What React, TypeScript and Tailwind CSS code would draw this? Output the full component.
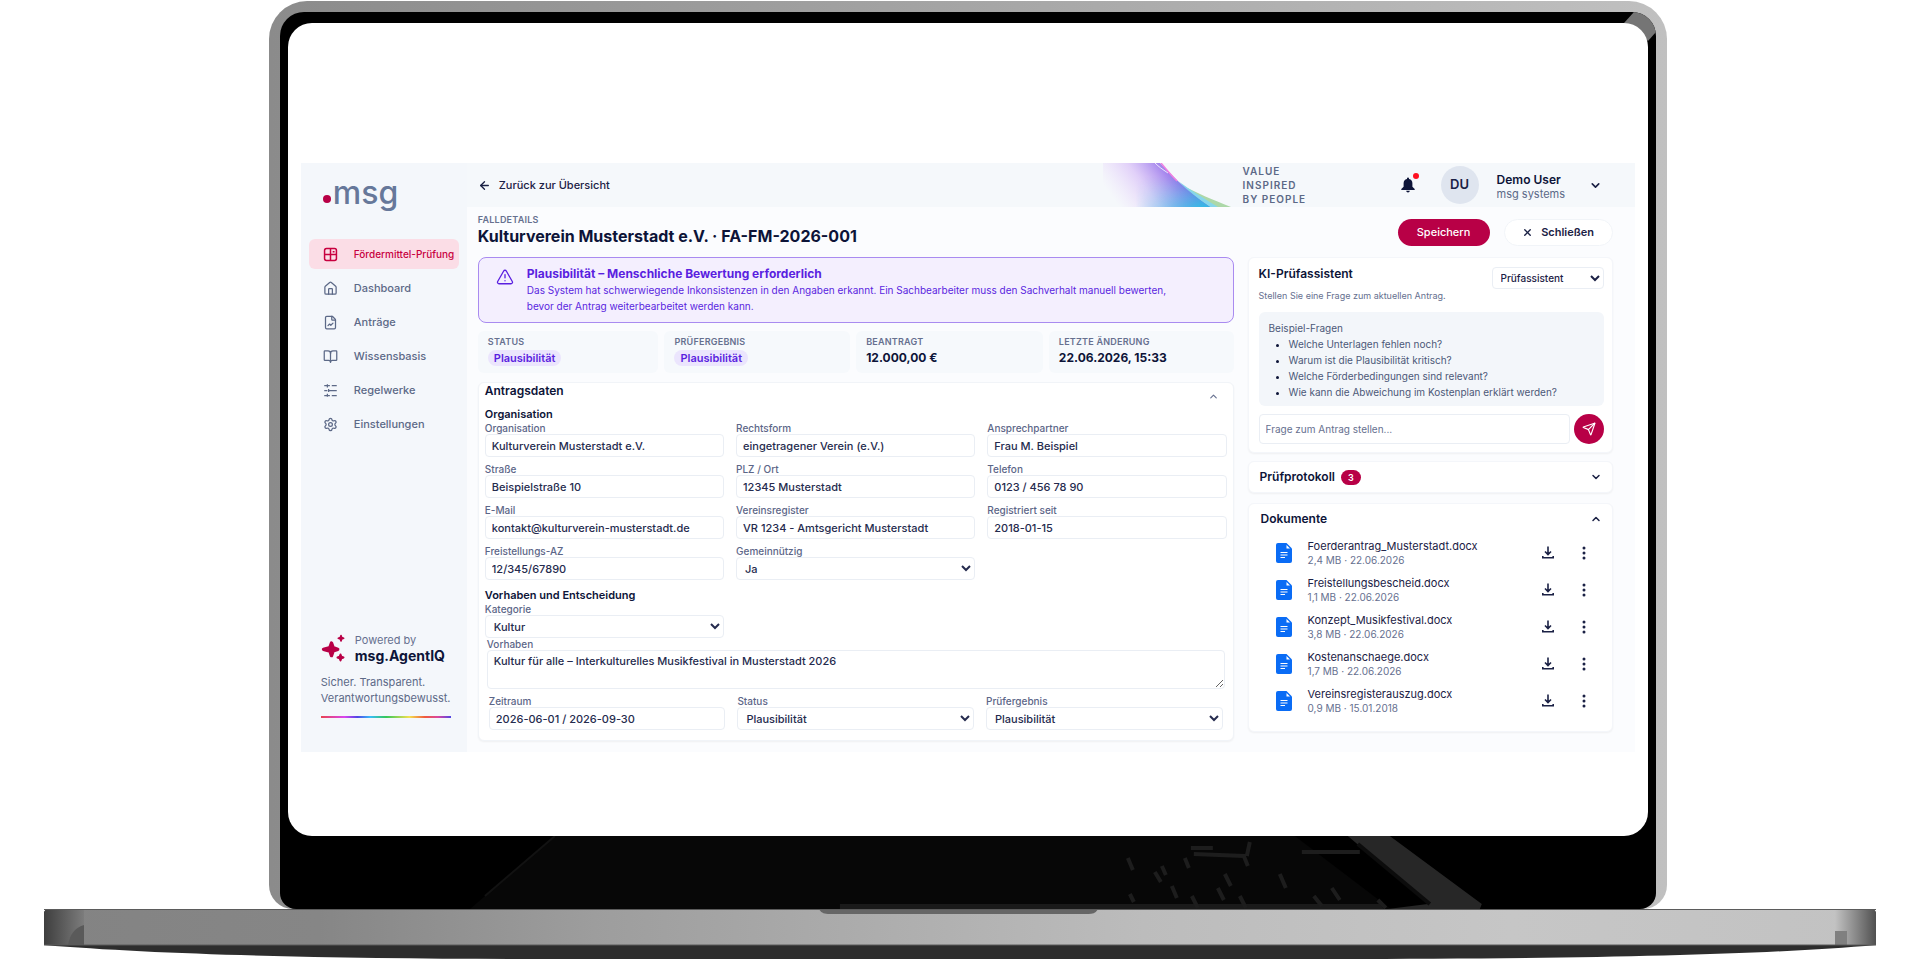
import { useId, useState } from "react";
import type { ReactNode } from "react";
import {
  ArrowLeft,
  BookOpen,
  ChevronDown,
  ChevronUp,
  FileChartLine,
  House,
  Send,
  Settings,
  TriangleAlert,
  X,
} from "lucide-react";

const inputClass =
  "h-[23px] w-full rounded border border-[#eaeef4] bg-white px-1.5 text-[11px] font-medium text-[#252b4e]";
const selectClass =
  "h-[23px] w-full rounded border border-[#eaeef4] bg-white px-1 text-[11px] font-medium text-[#252b4e]";

const navItems = [
  { name: "Fördermittel-Prüfung", href: "#pruefung", icon: <GridIcon /> },
  { name: "Dashboard", href: "#dashboard", icon: <House size={15} /> },
  { name: "Anträge", href: "#antraege", icon: <FileChartLine size={15} /> },
  { name: "Wissensbasis", href: "#wissensbasis", icon: <BookOpen size={15} /> },
  { name: "Regelwerke", href: "#regelwerke", icon: <RulesIcon /> },
  { name: "Einstellungen", href: "#einstellungen", icon: <Settings size={15} /> },
];

const questions = [
  "Welche Unterlagen fehlen noch?",
  "Warum ist die Plausibilität kritisch?",
  "Welche Förderbedingungen sind relevant?",
  "Wie kann die Abweichung im Kostenplan erklärt werden?",
];

const documents = [
  { name: "Foerderantrag_Musterstadt.docx", meta: "2,4 MB · 22.06.2026" },
  { name: "Freistellungsbescheid.docx", meta: "1,1 MB · 22.06.2026" },
  { name: "Konzept_Musikfestival.docx", meta: "3,8 MB · 22.06.2026" },
  { name: "Kostenanschaege.docx", meta: "1,7 MB · 22.06.2026" },
  { name: "Vereinsregisterauszug.docx", meta: "0,9 MB · 15.01.2018" },
];

function GridIcon() {
  return (
    <svg width="15" height="15" viewBox="0 0 24 24" fill="none" stroke="currentColor" strokeWidth="2.4">
      <rect x="2.5" y="2.5" width="19" height="19" rx="3" />
      <path d="M12 2.5v19M2.5 12h19M15.5 7.5h3" />
    </svg>
  );
}

function RulesIcon() {
  return (
    <svg width="15" height="15" viewBox="0 0 24 24" fill="none" stroke="currentColor" strokeWidth="2">
      <path d="M2 4h9M14 4h8M2 12h5M10 12h12M2 20h9M14 20h8M7 2v5M9 9.5v5M7 17v5" />
    </svg>
  );
}

function SparkleIcon() {
  return (
    <svg width="24" height="28" viewBox="0 0 24 28" fill="#b80046" stroke="#b80046" strokeLinejoin="round">
      <path strokeWidth="3.4" d="M10.500 9l1.600 4.600 4.600 1.700-4.600 1.700-1.600 4.600-1.600-4.600-6.400-1.700 6.400-1.700z" />
      <path strokeWidth="1.6" d="M20 1.5l.7 2 2 .7-2 .7-.7 2-.7-2-2-.7 2-.7z" />
      <path strokeWidth="2" d="M19.5 20.5l.8 2.2 2.2.8-2.2.8-.8 2.2-.8-2.2-2.2-.8 2.2-.8z" />
    </svg>
  );
}

function BellIcon() {
  return (
    <svg width="14" height="16" viewBox="0 0 14 16" fill="#0d1438">
      <path d="M7 .5a1 1 0 0 0-1 1v.4A4.4 4.4 0 0 0 2.6 6.2v3.6L.3 12v.9h13.4V12l-2.3-2.2V6.2A4.4 4.4 0 0 0 8 1.9v-.4a1 1 0 0 0-1-1zM5.2 13.7h3.6a1.8 1.8 0 0 1-3.6 0z" />
    </svg>
  );
}

function DocIcon() {
  return (
    <svg width="16" height="20" viewBox="0 0 16 20">
      <path d="M2 0h8.5L16 5.500V18a2 2 0 0 1-2 2H2a2 2 0 0 1-2-2V2a2 2 0 0 1 2-2z" fill="#0a6cf5" />
      <path d="M10.500 2v3.500H14z" fill="#fff" />
      <path d="M4.500 9.500h7M4.500 12h7M4.500 14.500h4.500" stroke="#fff" strokeWidth="1.1" />
    </svg>
  );
}

function DownloadIcon() {
  return (
    <svg width="12" height="13" viewBox="0 0 12 13" fill="none" stroke="#1b2145" strokeWidth="1.6">
      <path d="M6 .5v8M3 5.500l3 3 3-3M.8 10v1.800h10.400V10" />
    </svg>
  );
}

function DotsIcon() {
  return (
    <svg width="4" height="14" viewBox="0 0 4 14" fill="#1b2145">
      <circle cx="2" cy="2" r="1.5" />
      <circle cx="2" cy="7" r="1.5" />
      <circle cx="2" cy="12" r="1.5" />
    </svg>
  );
}

function HeaderWave() {
  return (
    <svg width="130" height="44" viewBox="0 0 130 44">
      <defs>
        <linearGradient id="wave" x1="0" y1="0.5" x2="1" y2="0.2">
          <stop offset="0" stopColor="#ecdcfb" stopOpacity="0" />
          <stop offset="0.35" stopColor="#dcc6f8" stopOpacity="0.8" />
          <stop offset="0.6" stopColor="#a98bee" />
          <stop offset="0.85" stopColor="#5b50dd" />
        </linearGradient>
        <linearGradient id="waveBottom" x1="0" y1="0" x2="0" y2="1">
          <stop offset="0.3" stopColor="#3cc5e6" stopOpacity="0" />
          <stop offset="1" stopColor="#2fc0e4" stopOpacity="0.9" />
        </linearGradient>
        <linearGradient id="waveFade" x1="0" y1="0" x2="1" y2="0">
          <stop offset="0.25" stopColor="#fff" stopOpacity="0" />
          <stop offset="0.75" stopColor="#fff" />
        </linearGradient>
        <mask id="waveMask">
          <rect width="130" height="44" fill="url(#waveFade)" />
        </mask>
      </defs>
      <path d="M79 22c16 9 30 14 49 22H103z" fill="#acd8a8" />
      <path d="M75 18c14 10 24 16 40 26H101z" fill="#86d6ea" />
      <path d="M0 0h57c12 12 26 28 50 44H0z" fill="url(#wave)" />
      <path d="M0 0h57c12 12 26 28 50 44H0z" fill="url(#waveBottom)" mask="url(#waveMask)" />
      <path d="M52 0c4 4 7 6 13 10" stroke="#fff" strokeWidth="0.8" fill="none" />
      <path d="M58 0c5 6 9 11 16 18" stroke="#ee7fe0" strokeWidth="1.5" fill="none" />
    </svg>
  );
}

function Field({
  label,
  value,
  options,
}: {
  label: string;
  value: string;
  options?: string[];
}) {
  const id = useId();

  return (
    <div className="flex flex-col">
      <label htmlFor={id} className="text-[10px] leading-3 font-medium text-[#5c6688]">
        {label}
      </label>
      {options ? (
        <select id={id} defaultValue={value} className={selectClass}>
          {options.map((option) => (
            <option key={option}>{option}</option>
          ))}
        </select>
      ) : (
        <input id={id} type="text" defaultValue={value} className={inputClass} />
      )}
    </div>
  );
}

function Stat({ label, children }: { label: string; children: ReactNode }) {
  return (
    <div className="flex flex-col gap-0.5 rounded-md bg-[#f6f9fc] px-2.5 pt-[5px] pb-[7px]">
      <dt className="text-[9px] leading-3 font-semibold tracking-wide text-[#66708f]">{label}</dt>
      <dd className="flex h-4 items-center text-xs font-bold text-[#0d1438]">{children}</dd>
    </div>
  );
}

function Badge() {
  return (
    <span className="rounded-full bg-[#ebe5fd] px-1.5 text-[11px] leading-4 font-semibold text-[#5a1fe0]">
      Plausibilität
    </span>
  );
}

function Sidebar() {
  const [active, setActive] = useState(navItems[0].name);

  return (
    <aside className="flex w-[166px] shrink-0 flex-col bg-[#f4f7fb] pt-2.5">
      {/* Logo */}
      <a href="#start" className="ml-[22px] flex h-10 items-center text-[32px] font-medium text-[#66789a]">
        <span className="mt-3 mr-0.5 size-2 rounded-full bg-[#b80046]" />
        msg
      </a>

      <nav className="mt-[26px] flex flex-col gap-1 px-2">
        {navItems.map((item) => {
          const isActive = active === item.name;

          return (
            <a
              key={item.name}
              href={item.href}
              onClick={() => setActive(item.name)}
              className={`flex h-[30px] items-center gap-4 rounded-md pl-3.5 font-medium whitespace-nowrap ${
                isActive ? "bg-[#fbdde6] text-[10px] text-[#c8003f]" : "text-[11px] text-[#5c6987]"
              }`}
            >
              <span className="shrink-0">{item.icon}</span>
              {item.name}
            </a>
          );
        })}
      </nav>

      <div className="mt-auto pb-[34px] pl-5">
        <div className="flex items-center gap-2.5">
          <SparkleIcon />
          <div>
            <p className="text-[11px] leading-4 text-[#66708f]">Powered by</p>
            <p className="text-sm leading-4 font-bold text-[#0d1438]">msg.AgentIQ</p>
          </div>
        </div>
        <p className="mt-2.5 text-[11px] leading-4 text-[#5c6987]">
          Sicher. Transparent.
          <br />
          Verantwortungsbewusst.
        </p>
        <div className="mt-2.5 h-0.5 w-[130px] bg-[linear-gradient(90deg,#e8434f,#d946ef_18%,#4f46e5_28%,#38bdf8_38%,#34c759_50%,#f5e050_68%,#ef5a3c_80%,#d946a0_90%,#4f46e5)]" />
      </div>
    </aside>
  );
}

function Header() {
  return (
    <header className="flex h-11 items-center bg-[#f5f8fb] pl-[11px]">
      <a href="#uebersicht" className="flex items-center gap-2 text-[11px] font-medium text-[#1b2145]">
        <ArrowLeft size={13} strokeWidth={2.5} />
        Zurück zur Übersicht
      </a>
      <div className="ml-auto flex w-[532px] items-center">
        <HeaderWave />
        <p className="ml-2.5 w-[158px] text-[10px] leading-[14px] font-semibold tracking-widest text-[#5c6987]">
          VALUE
          <br />
          INSPIRED
          <br />
          BY PEOPLE
        </p>
        <button type="button" aria-label="Benachrichtigungen" className="relative">
          <BellIcon />
          <span className="absolute -top-1 -right-1 size-1.5 rounded-full bg-[#ff1020]" />
        </button>
        <div className="ml-[26px] flex size-[38px] items-center justify-center rounded-full bg-[#dfe5ef] text-[13px] font-semibold text-[#1b2145]">
          DU
        </div>
        <div className="ml-[18px] w-[92px] pt-1 text-[#0d1438]">
          <p className="text-xs leading-[15px] font-semibold">Demo User</p>
          <p className="text-[11px] leading-[15px] text-[#5c6987]">msg systems</p>
        </div>
        <button type="button" aria-label="Benutzermenü">
          <ChevronDown size={13} strokeWidth={3} className="text-[#1b2145]" />
        </button>
      </div>
    </header>
  );
}

function CaseForm() {
  const projectId = useId();

  return (
    <section className="mt-[9px] rounded-md border border-[#f1f4f8] bg-white px-1.5 pb-2.5 shadow-xs">
      <div className="flex h-6 items-start justify-between pr-2">
        <h2 className="text-xs leading-4 font-semibold text-[#0d1438]">Antragsdaten</h2>
        <button type="button" aria-label="Antragsdaten einklappen" className="pt-2">
          <ChevronUp size={11} strokeWidth={2.5} className="text-[#66708f]" />
        </button>
      </div>

      <h3 className="text-[11px] leading-[14px] font-semibold text-[#0d1438]">Organisation</h3>
      <div className="mt-px grid grid-cols-3 gap-x-3 gap-y-1.5">
        <Field label="Organisation" value="Kulturverein Musterstadt e.V." />
        <Field label="Rechtsform" value="eingetragener Verein (e.V.)" />
        <Field label="Ansprechpartner" value="Frau M. Beispiel" />
        <Field label="Straße" value="Beispielstraße 10" />
        <Field label="PLZ / Ort" value="12345 Musterstadt" />
        <Field label="Telefon" value="0123 / 456 78 90" />
        <Field label="E-Mail" value="kontakt@kulturverein-musterstadt.de" />
        <Field label="Vereinsregister" value="VR 1234 - Amtsgericht Musterstadt" />
        <Field label="Registriert seit" value="2018-01-15" />
        <Field label="Freistellungs-AZ" value="12/345/67890" />
        <Field label="Gemeinnützig" value="Ja" options={["Ja", "Nein"]} />
      </div>

      <h3 className="mt-2 text-[11px] leading-[14px] font-semibold text-[#0d1438]">
        Vorhaben und Entscheidung
      </h3>
      <div className="mt-px grid grid-cols-3 gap-x-3">
        <Field label="Kategorie" value="Kultur" options={["Kultur", "Sport", "Bildung"]} />
      </div>
      <div className="flex flex-col px-0.5">
        <label htmlFor={projectId} className="text-[10px] leading-3 font-medium text-[#5c6688]">
          Vorhaben
        </label>
        <textarea
          id={projectId}
          defaultValue="Kultur für alle – Interkulturelles Musikfestival in Musterstadt 2026"
          className="h-[39px] rounded border border-[#eaeef4] bg-white px-1.5 py-[3px] text-[11px] leading-[14px] font-medium text-[#252b4e]"
        />
      </div>
      <div className="mt-1.5 grid grid-cols-3 gap-x-3 px-1">
        <Field label="Zeitraum" value="2026-06-01 / 2026-09-30" />
        <Field label="Status" value="Plausibilität" options={["Plausibilität", "In Prüfung"]} />
        <Field label="Prüfergebnis" value="Plausibilität" options={["Plausibilität", "Freigegeben"]} />
      </div>
    </section>
  );
}

function Assistant() {
  return (
    <section className="rounded-md border border-[#f4f6fa] bg-white pt-2 pr-2 pb-2 pl-2.5 shadow-xs">
      <div className="flex items-start justify-between">
        <h2 className="text-xs leading-4 font-semibold text-[#0d1438]">KI-Prüfassistent</h2>
        <select
          aria-label="Assistent"
          className="mt-px h-[22px] w-[112px] rounded border border-[#eaeef4] bg-white px-1 text-[10px] font-medium text-[#1b2145]"
        >
          <option>Prüfassistent</option>
        </select>
      </div>
      <p className="text-[9px] leading-[14px] text-[#66708f]">Stellen Sie eine Frage zum aktuellen Antrag.</p>

      <div className="mt-[9px] rounded-md bg-[#f3f6fa] px-2.5 pt-2 pb-1.5 text-[10px] leading-4 text-[#4c5878]">
        <p>Beispiel-Fragen</p>
        <ul className="list-disc pl-5 marker:text-[#0d1438]">
          {questions.map((question) => (
            <li key={question}>{question}</li>
          ))}
        </ul>
      </div>

      <form onSubmit={(e) => e.preventDefault()} className="mt-2 flex items-center gap-1">
        <input
          type="text"
          aria-label="Frage zum Antrag"
          placeholder="Frage zum Antrag stellen..."
          className="h-[30px] min-w-0 flex-1 rounded border border-[#eaeef4] px-1.5 text-[10px] placeholder:text-[#66708f]"
        />
        <button
          type="submit"
          aria-label="Senden"
          className="flex size-[30px] items-center justify-center rounded-full bg-[#b80046] text-white"
        >
          <Send size={14} />
        </button>
      </form>
    </section>
  );
}

function Documents() {
  return (
    <section className="mt-2.5 rounded-md border border-[#f4f6fa] bg-white pr-2.5 pb-3 pl-3 shadow-xs">
      <div className="flex h-[30px] items-center justify-between">
        <h2 className="text-xs font-semibold text-[#0d1438]">Dokumente</h2>
        <button type="button" aria-label="Dokumente einklappen">
          <ChevronUp size={12} strokeWidth={3} className="text-[#1b2145]" />
        </button>
      </div>
      <ul>
        {documents.map((doc) => (
          <li key={doc.name} className="flex h-[37px] items-center pr-4 pl-[15px]">
            <DocIcon />
            <div className="ml-4 flex-1">
              <p className="text-[11px] leading-[14px] text-[#1b2145]">{doc.name}</p>
              <p className="text-[10px] leading-[14px] text-[#66708f]">{doc.meta}</p>
            </div>
            <button type="button" aria-label={`${doc.name} herunterladen`} className="mr-7">
              <DownloadIcon />
            </button>
            <button type="button" aria-label={`Weitere Aktionen für ${doc.name}`}>
              <DotsIcon />
            </button>
          </li>
        ))}
      </ul>
    </section>
  );
}

function CasePage() {
  return (
    <div className="flex bg-[#fbfcfe]">
      <Sidebar />
      <div className="min-w-0 flex-1">
        <Header />
        <main className="pr-[22px] pb-[11px] pl-[11px]">
          <div className="flex h-[50px] items-center">
            <div className="pb-1">
              <p className="text-[9px] leading-3 font-semibold tracking-wide text-[#66708f]">FALLDETAILS</p>
              <h1 className="text-base leading-5 font-bold text-[#0d1438]">
                Kulturverein Musterstadt e.V. · FA-FM-2026-001
              </h1>
            </div>
            <button
              type="button"
              className="ml-auto h-[27px] w-[92px] rounded-full bg-[#b80046] text-[11px] font-medium text-white"
            >
              Speichern
            </button>
            <button
              type="button"
              className="ml-3.5 flex h-[27px] w-[109px] items-center justify-center gap-2 rounded-full border border-[#f1f4f8] bg-white text-[11px] font-semibold text-[#1b2145]"
            >
              <X size={11} strokeWidth={3} />
              Schließen
            </button>
          </div>

          <div className="flex items-start gap-3.5">
            <div className="min-w-0 flex-1">
              <div
                role="alert"
                className="flex gap-[13px] rounded-lg border border-[#a98bf0] bg-[#f4effe] px-[17px] py-2 text-[#5a1fe0]"
              >
                <TriangleAlert size={18} strokeWidth={1.75} className="mt-0.5 shrink-0" />
                <div>
                  <p className="text-xs leading-4 font-bold">
                    Plausibilität – Menschliche Bewertung erforderlich
                  </p>
                  <p className="max-w-[660px] text-[10px] leading-4">
                    Das System hat schwerwiegende Inkonsistenzen in den Angaben erkannt. Ein Sachbearbeiter muss
                    den Sachverhalt manuell bewerten, bevor der Antrag weiterbearbeitet werden kann.
                  </p>
                </div>
              </div>

              <dl className="mt-2 grid grid-cols-[181fr_186fr_187fr_185fr] gap-x-1.5">
                <Stat label="STATUS">
                  <Badge />
                </Stat>
                <Stat label="PRÜFERGEBNIS">
                  <Badge />
                </Stat>
                <Stat label="BEANTRAGT">12.000,00 €</Stat>
                <Stat label="LETZTE ÄNDERUNG">22.06.2026, 15:33</Stat>
              </dl>

              <CaseForm />
            </div>

            <div className="w-[365px] shrink-0">
              <Assistant />
              <section className="mt-2 flex h-8 items-center rounded-md border border-[#f4f6fa] bg-white pr-2.5 pl-[11px] shadow-xs">
                <h2 className="text-xs font-semibold text-[#0d1438]">Prüfprotokoll</h2>
                <span className="ml-1.5 w-5 rounded-full bg-[#b80046] text-center text-[9px] leading-[15px] font-semibold text-white">
                  3
                </span>
                <button type="button" aria-label="Prüfprotokoll ausklappen" className="ml-auto">
                  <ChevronDown size={12} strokeWidth={3} className="text-[#1b2145]" />
                </button>
              </section>
              <Documents />
            </div>
          </div>
        </main>
      </div>
    </div>
  );
}

// Dark strip below the display with the keyboard mirrored in it
function Chin() {
  return (
    <svg viewBox="0 0 1376 73" preserveAspectRatio="none" className="block h-[73px] w-full" aria-hidden="true">
      <path d="M275 0h740l96 73H190z" fill="#070707" />
      <path d="M560 68h540l4 5H560z" fill="#1a1a1a" />
      <path d="M275 0L205 60" stroke="#121212" strokeWidth="2" />
      <path d="M1068 0h42l92 68-2 5h-92l40-5z" fill="#272727" />
      <path d="M1078 8l72 60" stroke="#0c0c0c" strokeWidth="4" />
      <path
        d="M848 22l5 12M875 36l6 10M892 50l5 12M905 22l4 10M850 58l4 8M911 12l22 0M914 18l50 2 4 10M970 6l-3 14M1022 16h58M945 38l6 12M938 52l6 12M1000 38l6 14M960 60l6 12M1052 52l8 12M1034 60l8 10M912 60l6 12M1098 64l8 8M882 30l4 9"
        stroke="#1d1d1d"
        strokeWidth="4"
        fill="none"
      />
    </svg>
  );
}

function LaptopBase() {
  return (
    <svg viewBox="0 0 1833 52" preserveAspectRatio="none" className="block h-[52px] w-full" aria-hidden="true">
      <defs>
        <linearGradient id="metal" x1="0" y1="0" x2="1" y2="0">
          <stop offset="0" stopColor="#838383" />
          <stop offset="0.15" stopColor="#868686" />
          <stop offset="0.3" stopColor="#9d9d9d" />
          <stop offset="0.6" stopColor="#bcbcbc" />
          <stop offset="0.8" stopColor="#c6c6c6" />
          <stop offset="1" stopColor="#c2c2c2" />
        </linearGradient>
        <linearGradient id="leftEnd" x1="0" y1="0" x2="1" y2="0">
          <stop offset="0" stopColor="#3e3e3e" />
          <stop offset="1" stopColor="#7c7c7c" />
        </linearGradient>
        <linearGradient id="rightEnd" x1="0" y1="0" x2="1" y2="0">
          <stop offset="0" stopColor="#c2c2c2" />
          <stop offset="0.5" stopColor="#8a8a8a" />
          <stop offset="1" stopColor="#505050" />
        </linearGradient>
      </defs>
      <path d="M0 36c120 10 300 14 500 14h790c250 0 430-4 543-14z" fill="#2d2d2d" />
      <path d="M2 0h1829l2 3v33H0V3z" fill="url(#metal)" />
      <path d="M2 0h38v36H0V3z" fill="url(#leftEnd)" />
      <path d="M24 36c2-10 6-17 16-20v20z" fill="#5a5a5a" />
      <path d="M1792 0h39l2 3v33h-41z" fill="url(#rightEnd)" />
      <path d="M1792 22h12v14h-12z" fill="#808080" />
      <path d="M0 .5h1833M0 36h1833" stroke="#5a5a5a" strokeWidth="1" />
      <path d="M776 1h278c-2 3-5 4-9 4H786c-5 0-8-1-10-4z" fill="#666" />
    </svg>
  );
}

export default function App() {
  return (
    <div className="min-h-screen overflow-hidden bg-white pt-px font-['Inter',sans-serif]">
      {/* Laptop lid */}
      <div className="mr-[13.2%] ml-[14%] rounded-t-[38px] rounded-b-3xl bg-linear-to-r from-[#8b8b8b] to-[#c0c0c0] px-[11px] pt-[11px]">
        <div className="relative overflow-hidden rounded-t-3xl rounded-b-2xl bg-black pt-[11px]">
          {/* Light reflex on the bezel corner */}
          <svg width="32" height="32" viewBox="0 0 32 32" className="absolute top-0 right-0" aria-hidden="true">
            <path d="M10 0h22v20l-8 9L0 11z" fill="#757575" />
          </svg>
          <div className="relative mx-2 rounded-3xl bg-white px-[13px] pt-[140px] pb-[84px]">
            <CasePage />
          </div>
          <Chin />
        </div>
      </div>

      <div className="mx-11">
        <LaptopBase />
      </div>
    </div>
  );
}
